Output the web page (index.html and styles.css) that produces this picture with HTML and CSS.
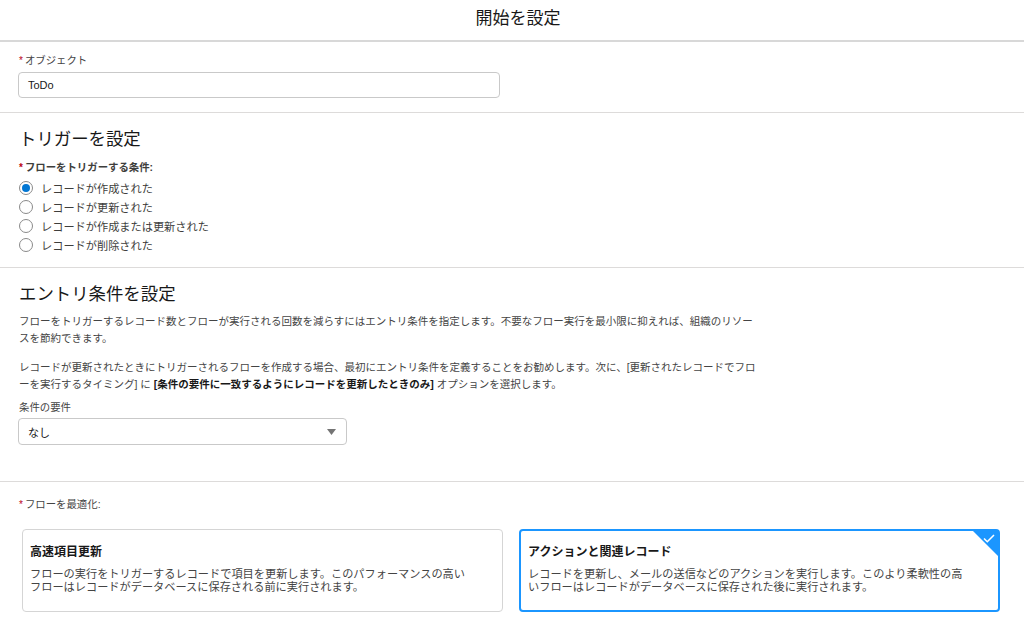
FILE: index.html
```html
<!DOCTYPE html>
<html lang="ja">
<head>
<meta charset="utf-8">
<title>開始を設定</title>
<link rel="stylesheet" href="styles.css">
</head>
<body>
<div class="modal">
  <header class="modal-header">開始を設定</header>

  <section class="section section-object">
    <label class="field-label"><abbr class="req">*</abbr>オブジェクト</label>
    <div class="input">ToDo</div>
  </section>

  <section class="section section-trigger">
    <h2 class="section-title">トリガーを設定</h2>
    <div class="field-label bold"><abbr class="req">*</abbr>フローをトリガーする条件:</div>
    <ul class="radio-group">
      <li class="radio-row"><span class="radio checked"></span>レコードが作成された</li>
      <li class="radio-row"><span class="radio"></span>レコードが更新された</li>
      <li class="radio-row"><span class="radio"></span>レコードが作成または更新された</li>
      <li class="radio-row"><span class="radio"></span>レコードが削除された</li>
    </ul>
  </section>

  <section class="section section-entry">
    <h2 class="section-title">エントリ条件を設定</h2>
    <p class="help">フローをトリガーするレコード数とフローが実行される回数を減らすにはエントリ条件を指定します。不要なフロー実行を最小限に抑えれば、組織のリソー<br>スを節約できます。</p>
    <p class="help help-2">レコードが更新されたときにトリガーされるフローを作成する場合、最初にエントリ条件を定義することをお勧めします。次に、[更新されたレコードでフロ<br>ーを実行するタイミング] に <b>[条件の要件に一致するようにレコードを更新したときのみ]</b> オプションを選択します。</p>
    <div class="field-label plain">条件の要件</div>
    <div class="select">
      <span>なし</span>
      <svg class="caret" width="9" height="6" viewBox="0 0 9 6"><path d="M0 0h9L4.5 6z" fill="#747474"/></svg>
    </div>
  </section>

  <section class="section section-optimize">
    <div class="field-label"><abbr class="req">*</abbr>フローを最適化:</div>
    <div class="cards">
      <div class="card">
        <div class="card-title">高速項目更新</div>
        <div class="card-desc">フローの実行をトリガーするレコードで項目を更新します。このパフォーマンスの高いフローはレコードがデータベースに保存される前に実行されます。</div>
      </div>
      <div class="card selected">
        <div class="card-title">アクションと関連レコード</div>
        <div class="card-desc">レコードを更新し、メールの送信などのアクションを実行します。このより柔軟性の高いフローはレコードがデータベースに保存された後に実行されます。</div>
        <span class="corner"></span>
        <svg class="check" width="12" height="9" viewBox="0 0 12 9"><path d="M1 4.5l3.3 3.2L11 1" fill="none" stroke="#fff" stroke-width="1.6"/></svg>
      </div>
    </div>
  </section>
</div>
</body>
</html>
```
FILE: styles.css
```css
* { box-sizing: border-box; }
html, body { margin: 0; padding: 0; background: #fff; }
body {
  font-family: "Liberation Sans", "Noto Sans CJK JP", sans-serif;
  color: #3e3e3c;
  width: 1024px;
  height: 618px;
  overflow: hidden;
}
.modal { display: flex; flex-direction: column; }

.modal-header {
  height: 42px;
  border-bottom: 2px solid #d8d8d8;
  text-align: center;
  font-size: 17px;
  line-height: 37px;
  color: #181818;
  padding-left: 12px;
}

.section {
  padding: 12px 18px 14px 18px;
  border-bottom: 1px solid #dddbda;
  display: flex;
  flex-direction: column;
  align-items: flex-start;
}
.section-trigger { padding-top: 14px; padding-bottom: 13px; }
.section-entry { padding-top: 14px; padding-bottom: 36px; }
.section-optimize { padding-top: 16px; border-bottom: none; align-items: stretch; }

.field-label {
  font-size: 10.4px;
  line-height: 14px;
  color: #444;
  margin: 0 0 4px 1px;
}
.field-label.bold { font-weight: bold; color: #3e3e3c; margin: 10px 0 3px 1px; }
.field-label.plain { margin: 9px 0 3px 1px; }
.req {
  color: #ba0517;
  text-decoration: none;
  border: 0;
  margin-right: 2px;
  font-size: 10px;
}

.input {
  width: 482px;
  height: 26px;
  border: 1px solid #c9c9c9;
  border-radius: 4px;
  padding: 0 9px;
  display: flex;
  align-items: center;
  font-size: 11px;
  color: #181818;
}

.section-title {
  margin: 0 0 0 1px;
  font-weight: normal;
  font-size: 17.4px;
  line-height: 24px;
  color: #181818;
}

.radio-group { list-style: none; margin: 0; padding: 0; }
.radio-row {
  height: 19px;
  display: flex;
  align-items: center;
  font-size: 11.2px;
  color: #3e3e3c;
}
.radio {
  width: 14px;
  height: 14px;
  border: 1px solid #8a8a8a;
  border-radius: 50%;
  margin: 0 8px 0 1px;
  display: inline-flex;
  align-items: center;
  justify-content: center;
}
.radio.checked::after {
  content: "";
  width: 8px;
  height: 8px;
  border-radius: 50%;
  background: #0176d3;
}

.help {
  margin: 7px 0 0 1px;
  font-size: 10.5px;
  line-height: 16.5px;
  color: #444;
  max-width: 780px;
}
.help.help-2 { margin-top: 13px; }
.help b { color: #181818; }

.select {
  width: 329px;
  height: 27px;
  border: 1px solid #c9c9c9;
  border-radius: 4px;
  padding: 0 10px 0 9px;
  display: flex;
  align-items: center;
  justify-content: space-between;
  font-size: 11px;
  color: #181818;
}

.cards {
  display: flex;
  gap: 16px;
  margin: 13px 6px 0 4px;
}
.card {
  position: relative;
  width: 481px;
  height: 83px;
  border: 1px solid #d5d5d5;
  border-radius: 4px;
  padding: 14px 30px 0 7px;
}
.card.selected {
  border: 2px solid #1b96ff;
  padding: 13px 29px 0 7px;
}
.card-title {
  font-size: 12px;
  font-weight: bold;
  line-height: 16px;
  color: #181818;
}
.card-desc {
  margin-top: 8px;
  font-size: 11.2px;
  line-height: 13px;
  color: #444;
}
.corner {
  position: absolute;
  top: -1px;
  right: -1px;
  width: 0;
  height: 0;
  border-top: 27px solid #1b96ff;
  border-left: 27px solid transparent;
  border-top-right-radius: 3px;
}
.check {
  position: absolute;
  top: 3px;
  right: 3px;
}
```
